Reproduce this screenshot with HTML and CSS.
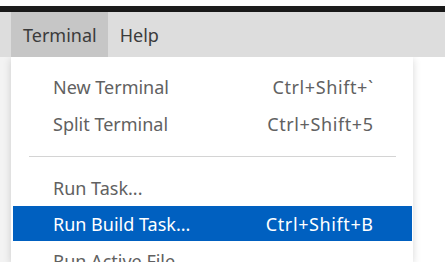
FILE: index.html
```html
<!DOCTYPE html>
<html>
<head>
<meta charset="utf-8">
<link rel="stylesheet" href="styles.css">
</head>
<body>
<div class="topstrip"></div>
<div class="titlebar"></div>
<div class="menubar">
  <div class="menubar-item active">Terminal</div>
  <div class="menubar-item">Help</div>
</div>
<div class="workspace">
  <div class="side"></div>
  <div class="dropdown">
    <div class="item"><span class="label">New Terminal</span><span class="key">Ctrl+Shift+`</span></div>
    <div class="item"><span class="label">Split Terminal</span><span class="key">Ctrl+Shift+5</span></div>
    <div class="sep"></div>
    <div class="item"><span class="label">Run Task...</span><span class="key"></span></div>
    <div class="item selected"><span class="label">Run Build Task...</span><span class="key">Ctrl+Shift+B</span></div>
    <div class="item"><span class="label">Run Active File</span><span class="key"></span></div>
  </div>
</div>
</body>
</html>
```
FILE: styles.css
```css
html, body {
  margin: 0;
  padding: 0;
  background: #ffffff;
  overflow: hidden;
  width: 445px;
  height: 262px;
}
body {
  font-family: "Noto Sans", "Open Sans", sans-serif;
  color: #616161;
}
.topstrip {
  height: 6px;
  background: #fbfbfb;
}
.titlebar {
  height: 6px;
  background: #181818;
}
.menubar {
  height: 45px;
  background: #dddddd;
  display: flex;
  padding-left: 11px;
}
.menubar-item {
  padding: 0 11px 0 12px;
  line-height: 46px;
  font-size: 18px;
  color: #3b3b3b;
}
.menubar-item.active {
  background: #c6c6c6;
}
.workspace {
  display: flex;
  height: 205px;
  overflow: hidden;
}
.side {
  width: 11px;
  background: #f3f3f3;
}
.dropdown {
  width: 402px;
  background: #ffffff;
  box-shadow: 0 2px 8px rgba(0, 0, 0, 0.16);
  padding: 11px 1px 0 2px;
  box-sizing: border-box;
}
.item {
  display: flex;
  justify-content: space-between;
  height: 37px;
  align-items: center;
  padding: 0 39px 0 40px;
  font-size: 18px;
  color: #616161;
}
.key {
  letter-spacing: 0.6px;
  margin-right: -0.6px;
}
.item.selected {
  background: #0060c0;
  color: #ffffff;
  height: 35px;
  margin-bottom: 1px;
}
.sep {
  height: 1px;
  background: #d4d4d4;
  margin: 14px 16px 12px 16px;
}
```
